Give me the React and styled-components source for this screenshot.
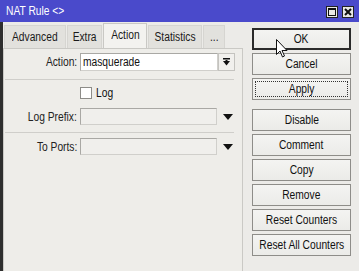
import React from "react";
import styled, { createGlobalStyle } from "styled-components";

const Global = createGlobalStyle`
  html, body { margin: 0; padding: 0; background: #ecebe8; }
  body { font-family: "Liberation Sans", Arial, sans-serif; font-size: 12px; color: #111; }
`;

const Narrow = styled.span`
  display: inline-block;
  white-space: nowrap;
  transform: scaleX(0.82);
  transform-origin: ${(p) => p.$o || "center"};
`;

const Window = styled.div`
  position: relative;
  width: 359px;
  height: 271px;
  background: #ecebe8;
  display: flex;
  flex-direction: column;
  overflow: hidden;
`;

const TitleBar = styled.div`
  height: 22px;
  flex: none;
  background: #4a4acb;
  color: #fff;
  display: flex;
  align-items: center;
  justify-content: space-between;
  padding: 0 5px 0 6px;
  font-size: 12.5px;
`;

const TitleButtons = styled.div`
  display: flex;
  gap: 4px;
  margin-top: 2px;
`;

const TitleButton = styled.div`
  width: 12px;
  height: 12px;
  box-sizing: border-box;
  background: #e8e8e6;
  border: 1px solid #222;
  display: flex;
  align-items: center;
  justify-content: center;
`;

const Body = styled.div`
  flex: 1;
  display: flex;
  border-left: 3px solid #2e2e2e;
`;

const LeftPane = styled.div`
  width: 240px;
  display: flex;
  flex-direction: column;
  padding-top: 1px;
`;

const TabBar = styled.div`
  display: flex;
  align-items: flex-end;
  height: 25px;
  padding-left: 1px;
`;

const Tab = styled.div`
  width: ${(p) => p.$w}px;
  height: ${(p) => (p.$active ? 25 : 23)}px;
  box-sizing: border-box;
  display: flex;
  align-items: center;
  justify-content: center;
  background: ${(p) => (p.$active ? "#f3f2ef" : "#e2e1dd")};
  border: 1px solid ${(p) => (p.$active ? "#c9c8c4" : "#d6d5d1")};
  border-bottom: none;
  margin-right: 1px;
  padding-bottom: ${(p) => (p.$active ? 3 : 0)}px;
  color: #1a1a1a;
  font-size: 12.5px;
`;

const Panel = styled.div`
  flex: 1;
  background: #eeede9;
  border: 1px solid #cac9c5;
  border-bottom: none;
  padding: 4px 0 0 0;
  display: flex;
  flex-direction: column;
`;

const Row = styled.div`
  display: grid;
  grid-template-columns: 73px auto;
  column-gap: 3px;
  align-items: center;
  height: ${(p) => p.$h}px;
  margin-top: ${(p) => p.$mt || 0}px;
`;

const Label = styled.div`
  text-align: right;
  color: #222;
  font-size: 12.5px;
`;

const Field = styled.div`
  display: flex;
  align-items: center;
`;

const Input = styled.div`
  width: ${(p) => p.$w}px;
  height: ${(p) => p.$h}px;
  box-sizing: border-box;
  background: ${(p) => (p.$white ? "#ffffff" : "#f0efec")};
  border: 1px solid #a9a8a4;
  border-right-color: #d0cfcb;
  border-bottom-color: #d0cfcb;
  padding-left: 2px;
  display: flex;
  align-items: center;
  color: #111;
  font-size: 12.5px;
  overflow: hidden;
`;

const DropButton = styled.div`
  width: 17px;
  height: 18px;
  box-sizing: border-box;
  border: 1px solid #c4c3bf;
  background: #f1f0ed;
  display: flex;
  align-items: center;
  justify-content: center;
`;

const Arrow = styled.div`
  margin-left: 6px;
  width: 0;
  height: 0;
  border-left: 5px solid transparent;
  border-right: 5px solid transparent;
  border-top: 6px solid #111;
`;

const Separator = styled.div`
  height: 1px;
  background: #cfceca;
  margin: ${(p) => p.$mt}px 8px 0 1px;
`;

const CheckBox = styled.div`
  width: 12px;
  height: 12px;
  box-sizing: border-box;
  background: #fff;
  border: 1px solid #8d8c88;
`;

const CheckLabel = styled.span`
  margin-left: 4px;
  font-size: 12.5px;
`;

const RightPane = styled.div`
  margin-left: 9px;
  width: 99px;
  padding-top: 6px;
  display: flex;
  flex-direction: column;
  gap: 3px;
`;

const Button = styled.div`
  height: 22px;
  box-sizing: border-box;
  border: ${(p) => (p.$default ? "2px solid #2a2a2a" : "1px solid #8e8d89")};
  background: linear-gradient(#f4f4f2, #ebebe8);
  display: flex;
  align-items: center;
  justify-content: center;
  position: relative;
  margin-bottom: ${(p) => p.$gapAfter || 0}px;
  color: #111;
  font-size: 12.5px;
`;

const FocusRing = styled.span`
  position: absolute;
  inset: 2px;
  border: 1px dotted #333;
`;

const Cursor = styled.svg`
  position: absolute;
  left: 276px;
  top: 39px;
`;

const tabs = [
  { t: "Advanced", w: 62 },
  { t: "Extra", w: 35 },
  { t: "Action", w: 44, active: true },
  { t: "Statistics", w: 54 },
  { t: "...", w: 22 },
];

const buttons = [
  { t: "OK", def: true },
  { t: "Cancel" },
  { t: "Apply", focus: true, gap: 6 },
  { t: "Disable" },
  { t: "Comment" },
  { t: "Copy" },
  { t: "Remove" },
  { t: "Reset Counters" },
  { t: "Reset All Counters" },
];

export default function App() {
  return (
    <>
      <Global />
      <Window>
        <TitleBar>
          <Narrow $o="left">NAT Rule &lt;&gt;</Narrow>
          <TitleButtons>
            <TitleButton>
              <svg width="8" height="8" viewBox="0 0 8 8">
                <rect x="0.5" y="0.5" width="7" height="7" fill="none" stroke="#111" />
                <rect x="0" y="0" width="8" height="2" fill="#111" />
              </svg>
            </TitleButton>
            <TitleButton>
              <svg width="8" height="8" viewBox="0 0 8 8">
                <path d="M1 1 L7 7 M7 1 L1 7" stroke="#111" strokeWidth="2" />
              </svg>
            </TitleButton>
          </TitleButtons>
        </TitleBar>
        <Body>
          <LeftPane>
            <TabBar>
              {tabs.map((x) => (
                <Tab key={x.t} $active={x.active} $w={x.w}>
                  <Narrow>{x.t}</Narrow>
                </Tab>
              ))}
            </TabBar>
            <Panel>
              <Row $h={18}>
                <Label>
                  <Narrow $o="right">Action:</Narrow>
                </Label>
                <Field>
                  <Input $w={138} $h={18} $white>
                    <Narrow $o="left">masquerade</Narrow>
                  </Input>
                  <DropButton>
                    <svg width="7" height="8" viewBox="0 0 7 8">
                      <rect x="0" y="0" width="7" height="1.5" fill="#111" />
                      <path d="M0 3 L7 3 L3.5 7.5 Z" fill="#111" />
                      <rect x="2.5" y="2" width="2" height="3" fill="#111" />
                    </svg>
                  </DropButton>
                </Field>
              </Row>
              <Separator $mt={8} />
              <Row $h={13} $mt={6}>
                <span />
                <Field>
                  <CheckBox />
                  <CheckLabel>
                    <Narrow $o="left">Log</Narrow>
                  </CheckLabel>
                </Field>
              </Row>
              <Row $h={17} $mt={9}>
                <Label>
                  <Narrow $o="right">Log Prefix:</Narrow>
                </Label>
                <Field>
                  <Input $w={137} $h={17} />
                  <Arrow />
                </Field>
              </Row>
              <Separator $mt={7} />
              <Row $h={17} $mt={5}>
                <Label>
                  <Narrow $o="right">To Ports:</Narrow>
                </Label>
                <Field>
                  <Input $w={137} $h={17} />
                  <Arrow />
                </Field>
              </Row>
            </Panel>
          </LeftPane>
          <RightPane>
            {buttons.map((b) => (
              <Button key={b.t} $default={b.def} $gapAfter={b.gap}>
                {b.focus && <FocusRing />}
                <Narrow>{b.t}</Narrow>
              </Button>
            ))}
          </RightPane>
        </Body>
        <Cursor width="12" height="19" viewBox="0 0 12 19">
          <path d="M0.5 0.5 L0.5 15.5 L4 12 L6.5 18 L8.5 17 L6 11.5 L11 11.5 Z" fill="#fff" stroke="#111" strokeWidth="1" />
        </Cursor>
      </Window>
    </>
  );
}
